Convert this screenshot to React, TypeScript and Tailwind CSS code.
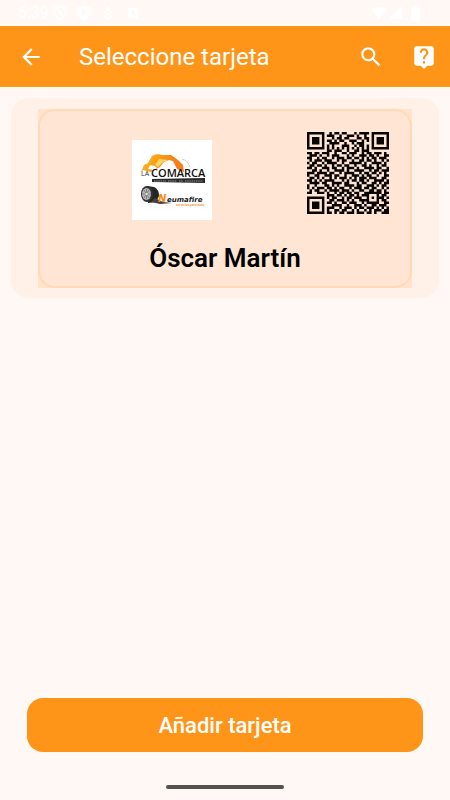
import React from "react";

const QR_ROWS = [
  "111111100101101100010111101111111",
  "100000101110010011101001001000001",
  "101110100010110110001101101011101",
  "101110101101011001110010101011101",
  "101110100111100100101110001011101",
  "100000101010001110010110101000001",
  "111111101010101010101010101111111",
  "000000001101110010011011100000000",
  "110110111001001101110010110111010",
  "011101001011100010100111011010011",
  "110010110010111011011010101101110",
  "010111011100101100100110110100101",
  "101100101111001001111101001111010",
  "011011010010110110010011010010110",
  "110100111011001011101001111011001",
  "001101001001111010011110010110111",
  "111011110110010111100101101101010",
  "100110011101100100111010110010011",
  "011010100101011101010111011100110",
  "110101011110001010110110100111101",
  "011110110011110110001011001101011",
  "100100011010100111101100111010110",
  "101011101101011001011101101100101",
  "010110010111101110100110011011010",
  "110011101001011011011001111111011",
  "000000001110110101101011100010110",
  "111111101011001011011100101011101",
  "100000100110111010100111100010110",
  "101110101101001101110010111110011",
  "101110100011110010011101001101110",
  "101110101110010111010110111010101",
  "100000101001101100101001010111011",
  "111111101101011011101110110100111",
];

const QR_PATH = QR_ROWS.map((row, y) =>
  row
    .split("")
    .map((cell, x) => (cell === "1" ? `M${x} ${y}h1v1h-1z` : ""))
    .join("")
).join("");

function StatusBar() {
  return (
    <div className="flex h-[26px] items-center justify-between pl-[18px] pr-[30px] text-white">
      <div className="flex items-center">
        <span className="w-[35px] text-base leading-none">5:39</span>
        <svg className="mr-[10px]" width="14" height="16" viewBox="0 0 14 16" fill="none" stroke="currentColor" strokeWidth="2">
          <path d="M7 1.3L12.5 3v4.500c0 3.500-2.500 5.500-5.500 7-3-1.500-5.500-3.500-5.500-7V3zM4 3l6 9" />
        </svg>
        <svg className="mr-[11px]" width="14" height="16" viewBox="0 0 14 16" fill="currentColor" fillRule="evenodd">
          <path d="M7 0l6.500 2.500v5c0 4-3 6.500-6.500 8-3.500-1.500-6.500-4-6.500-8v-5zM5 4.500v6l5-3z" />
        </svg>
        <svg className="mr-[13px]" width="12" height="14" viewBox="0 0 12 14" fill="none" stroke="currentColor" strokeWidth="1.5">
          <circle cx="6" cy="3" r="1.500" />
          <path d="M2 5.500l4 3.500 4-3.500M2 9.500l4 3 4-3" />
        </svg>
        <svg width="12" height="12" viewBox="0 0 12 12" fill="currentColor" fillRule="evenodd">
          <path d="M1 1h10v10H1zM5.300 3L3 9h1.400l.5-1.300h2.200L7.600 9H9L6.700 3zM6 4.700l.7 2H5.300z" />
        </svg>
      </div>
      <div className="flex items-center gap-[2px]">
        <svg width="16" height="14" viewBox="0 0 16 14" fill="currentColor"><path d="M0 3.500C4.500-.5 11.500-.5 16 3.500L8 13z" /></svg>
        <svg width="14" height="14" viewBox="0 0 14 14" fill="currentColor"><path d="M13 0v13H0z" /></svg>
        <svg className="ml-[6px]" width="9" height="15" viewBox="0 0 9 15" fill="currentColor"><path d="M3 0h3v1.500h1.500a1.500 1.500 0 011.500 1.500v10a2 2 0 01-2 2H2a2 2 0 01-2-2V3a1.500 1.500 0 011.500-1.500H3z" /></svg>
      </div>
    </div>
  );
}

function CompanyLogo() {
  return (
    <svg width="80" height="80" viewBox="0 0 80 80" role="img" aria-label="La Comarca Neumafire">
      <defs>
        <linearGradient id="flame" x1="0" y1="0" x2="1" y2="0.3">
          <stop offset="0" stopColor="#ffc01c" />
          <stop offset="1" stopColor="#f47b16" />
        </linearGradient>
      </defs>
      <rect width="80" height="80" fill="#fff" />
      <path d="M9 32l3-7 4-2 4-7c3-2 7-2 10-1h9c2 1 4 3 7 5l-2 2-7-2-5 2-4 5-9 5-8-2z" fill="url(#flame)" />
      <path d="M27 19l9 1-5 2-5 5-3-2z" fill="#ffd56a" />
      <path d="M18 25l5 1 2 2-3 2-6-1z" fill="#fff" />
      <path d="M41 21l5-1 5 5 1 7-7-3-2-4z" fill="#f67e1c" />
      <path d="M50 19c4 1 7 4 8 8" stroke="#d0d0d0" fill="none" />
      <text x="9" y="36" fontFamily="Open Sans, sans-serif" fontSize="7" fill="#333">LA</text>
      <text x="19" y="37" fontFamily="Open Sans, sans-serif" fontSize="11" fontWeight="600" fill="#111">COMARCA</text>
      <path d="M20 39l53-1v5l-53-1z" fill="#292929" />
      <path d="M22 41h8m1 0h3m2 0h9m2 0h4m2 0h18" stroke="#999" strokeDasharray="1.500 .7" />
      <path d="M15 46l7 1c4 2 5 5 5 9l-3 6-8 1z" fill="#252525" />
      <path d="M23 58l8 4 9 1-12 1-9-2z" fill="#444" />
      <ellipse cx="15" cy="54" rx="6" ry="8" fill="#333" />
      <ellipse cx="14.500" cy="54" rx="4.500" ry="6" fill="#b8b8b8" />
      <path d="M14.500 49v10M10 54h9M12 50l5 8M17 50l-5 8" stroke="#666" strokeWidth=".7" />
      <circle cx="14.500" cy="54" r="1.200" fill="#e5e5e5" />
      <text x="26" y="62" fontFamily="DejaVu Sans, sans-serif" fontSize="10" fontStyle="italic" fontWeight="700" fill="#f58a18">N</text>
      <text x="35" y="62" fontFamily="DejaVu Sans, sans-serif" fontSize="7" fontStyle="italic" fontWeight="700" fill="#222">eumafire</text>
      <text x="44" y="66" fontFamily="Open Sans, sans-serif" fontSize="3" fontWeight="700" fill="#ef973a">servicios para auto</text>
    </svg>
  );
}

export default function App() {
  return (
    <div className="flex min-h-screen flex-col bg-[#fff8f5] font-['Roboto',sans-serif]">
      <StatusBar />
      <header className="flex h-[61px] items-center bg-[#ff9518] pl-[18px] pr-[13px] text-white">
        <button type="button" aria-label="Volver" className="mr-[35px]">
          <svg width="26" height="26" viewBox="0 0 24 24" fill="currentColor"><path d="M20 11H7.830l5.590-5.590L12 4l-8 8 8 8 1.410-1.410L7.830 13H20z" /></svg>
        </button>
        <h1 className="flex-1 text-2xl font-normal">Seleccione tarjeta</h1>
        <button type="button" aria-label="Buscar" className="mr-[27px]">
          <svg width="26" height="26" viewBox="0 0 24 24" fill="currentColor"><path d="M15.500 14h-.79l-.28-.27A6.471 6.471 0 0016 9.500 6.500 6.500 0 109.500 16c1.610 0 3.090-.59 4.230-1.570l.27.28v.79l5 4.990L20.490 19zm-6 0C7.010 14 5 11.990 5 9.500S7.010 5 9.500 5 14 7.010 14 9.500 11.990 14 9.500 14z" /></svg>
        </button>
        <button type="button" aria-label="Ayuda">
          <svg width="26" height="26" viewBox="0 0 24 24" fill="currentColor"><path d="M19 2H5a2 2 0 00-2 2v14a2 2 0 002 2h4l3 3 3-3h4a2 2 0 002-2V4a2 2 0 00-2-2zm-6 16h-2v-2h2zm2.070-7.750l-.9.920C13.450 11.900 13 12.500 13 14h-2v-.5c0-1.100.45-2.100 1.170-2.830l1.240-1.260c.37-.36.59-.86.59-1.410a2 2 0 00-4 0H8a4 4 0 118 0c0 .88-.36 1.680-.93 2.250z" /></svg>
        </button>
      </header>
      <main className="flex flex-1 flex-col px-[11px] pt-[11px]">
        <section className="rounded-[18px] bg-[#fff1e8] px-[27px] pb-[10px] pt-[11px]">
          <div className="bg-[#ffe3ca]">
            <button type="button" className="flex w-full flex-col rounded-[17px] border-2 border-[#ffdab5] bg-[#ffe6d4] pb-[10px] pt-[21px]">
              <span className="flex w-full items-start justify-between pl-[92px] pr-[21px]">
                <span className="mt-2"><CompanyLogo /></span>
                <svg width="82" height="82" viewBox="0 0 33 33" fill="#080400" role="img" aria-label="Código QR"><path d={QR_PATH} /></svg>
              </span>
              <span className="mt-5 w-full text-center text-[26px] font-semibold leading-9 text-black">Óscar Martín</span>
            </button>
          </div>
        </section>
      </main>
      <footer className="flex flex-col items-center px-[27px] pb-[11px]">
        <button type="button" className="h-[54px] w-full rounded-2xl bg-[#ff9518] text-[22px] font-medium text-white">Añadir tarjeta</button>
        <div className="mt-[33px] h-1 w-[118px] rounded-full bg-[#555250]" />
      </footer>
    </div>
  );
}
